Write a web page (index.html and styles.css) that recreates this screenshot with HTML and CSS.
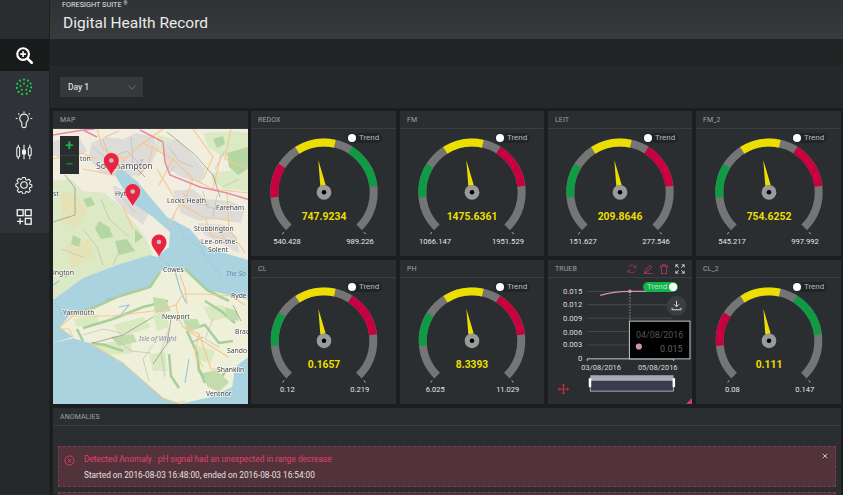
FILE: index.html
```html
<!DOCTYPE html>
<html lang="en">
<head>
<meta charset="utf-8">
<title>Digital Health Record</title>
<link rel="stylesheet" href="styles.css">
</head>
<body>
<svg class="defs" width="0" height="0" aria-hidden="true">
  <defs>
    <symbol id="hub" viewBox="-8 -34 16 42" overflow="visible">
      <circle class="hub" r="7.4"/>
      <circle class="hub-dot" r="2.3"/>
    </symbol>
  </defs>
</svg>
<div class="app">
  <aside class="side">
    <div class="side-top"></div>
    <div class="side-item side-active">
      <svg class="ico" viewBox="0 0 20 20"><circle cx="9" cy="9" r="6.500" fill="none" stroke="#fff" stroke-width="2.400"/><path d="M14 14l4.600 4.600" stroke="#fff" stroke-width="2.800" stroke-linecap="round"/><path d="M9 5.800v6.400M5.800 9h6.400" stroke="#fff" stroke-width="1.800"/></svg>
    </div>
    <nav class="side-nav">
      <div class="side-item">
        <svg class="ico" viewBox="0 0 20 20" fill="#1fd14a"><circle cx="10" cy="1.800" r="1.200"/><circle cx="14.500" cy="3" r="1.200"/><circle cx="17.300" cy="6.200" r="1.200"/><circle cx="18" cy="10.500" r="1.200"/><circle cx="16.600" cy="14.600" r="1.200"/><circle cx="13" cy="17.400" r="1.200"/><circle cx="8" cy="18" r="1.200"/><circle cx="4" cy="15.500" r="1.200"/><circle cx="2" cy="11" r="1.200"/><circle cx="2.500" cy="6.500" r="1.200"/><circle cx="5.500" cy="3" r="1.200"/><circle cx="10" cy="6" r="1.100"/><circle cx="13.800" cy="9" r="1.100"/><circle cx="12.500" cy="13" r="1.100"/><circle cx="7.500" cy="13" r="1.100"/><circle cx="6.200" cy="9" r="1.100"/></svg>
      </div>
      <div class="side-item">
        <svg class="ico" viewBox="0 0 20 20" fill="none" stroke="#f2f2f2" stroke-width="1.200"><path d="M7.600 16.500v-2.800c0-1.500-2.400-2.600-2.400-5.400a4.800 4.800 0 0 1 9.600 0c0 2.800-2.400 3.900-2.400 5.400v2.800c0 1.300-1 2-2.400 2s-2.400-.7-2.400-2z"/><path d="M10 .5v1.800M3.600 2.600l1.300 1.300M16.400 2.600l-1.300 1.300M.8 8.300h2M17.200 8.300h2"/></svg>
      </div>
      <div class="side-item">
        <svg class="ico" viewBox="0 0 20 20" fill="none" stroke="#f2f2f2" stroke-width="1.200"><rect x="2" y="4.500" width="3.200" height="11" rx="1.500"/><rect x="8.400" y="7.500" width="3.200" height="5" rx="1.500" fill="#f2f2f2"/><rect x="14.800" y="5" width="3.200" height="9" rx="1.500"/><path d="M3.600 2v2.500M3.600 15.500V18M10 2v5.500M10 12.500V18M16.400 2v3M16.400 14v4"/></svg>
      </div>
      <div class="side-item">
        <svg class="ico" viewBox="0 0 20 20" fill="none" stroke="#f2f2f2" stroke-width="1.300" stroke-linejoin="round"><path d="M8.300 1h3.400l.5 2.600 1.700.8 2.300-1.400 2.300 2.600-1.500 2.200.5 1.700 2.500.6v3l-2.500.6-.7 1.800 1.400 2.200-2.400 2.400-2.200-1.400-1.700.7-.6 2.500H8.300l-.6-2.500-1.700-.7-2.200 1.400-2.400-2.400 1.400-2.200-.7-1.800L-.4 12.100v-3l2.500-.6.500-1.700L1.100 4.600l2.300-2.600 2.300 1.400 1.700-.8z" transform="translate(1.300 .9) scale(.87)"/><circle cx="10" cy="10" r="3.600"/></svg>
      </div>
      <div class="side-item">
        <svg class="ico" viewBox="0 0 20 20" fill="none" stroke="#f2f2f2" stroke-width="1.500"><rect x="2.500" y="2" width="6.500" height="6.500"/><rect x="11.500" y="2" width="6.500" height="6.500"/><rect x="11.500" y="11.500" width="6.500" height="6.500"/><path d="M5.700 11.500V18M2.300 14.800h7"/></svg>
      </div>
    </nav>
  </aside>
  <main class="main">
    <header class="head">
      <div class="brand">FORESIGHT SUITE <sup class="reg">®</sup></div>
      <h1 class="title">Digital Health Record</h1>
    </header>
    <div class="subbar"></div>
    <div class="toolbar">
      <div class="select">
        <span>Day 1</span>
        <svg class="chev" viewBox="0 0 8 5"><path d="M.5.500L4 4.300 7.500.5" fill="none" stroke="#777" stroke-width=".8"/></svg>
      </div>
    </div>
    <div class="board">
      <div class="grid">
        <section class="panel map-panel">
          <div class="panel-head">MAP</div>
          <div class="map">
            <svg class="map-svg" viewBox="0 0 195 275">
              <rect class="land" width="195" height="275"/>
              <path class="forest-light" d="M0 52L18 50 30 62 52 64 70 80 92 108 100 125 64 136 30 149 0 171z"/>
              <path class="heath" d="M8 62L24 66 34 84 22 100 8 92z"/>
              <path class="heath" d="M12 116L36 110 42 128 18 140z"/>
              <path class="forest" d="M46 92l10 6 4 10-12 2-6-10zM62 112l12-2 8 12-16 4zM20 106l8 4-2 8-8-3zM82 100l8 8-8 6zM30 70l8-2 4 8-8 2z"/>
              <path class="forest-light" d="M104 6l16 4 6 14-12 6-10-10zM126 34l18 2 6 12-14 4zM150 4l30-2 15 2v16l-24 8-16-10zM158 44l30-4 7 2v20l-24-2-12-8z"/>
              <path class="forest" d="M174 24l21-6v22l-10 6-9-8zM160 10l10-3 2 8-8 4z"/>
              <path class="urban" d="M38 14L52 8 70 10 84 4 100 8 106 20 98 34 88 46 66 48 48 44 36 30z"/>
              <path class="urban" d="M112 14L124 10 136 22 152 40 148 54 128 48 116 40 110 26z"/>
              <path class="urban" d="M60 56L76 64 96 84 90 96 72 82 62 70z"/>
              <path class="urban" d="M120 62L140 60 152 70 178 72 192 80 188 94 162 90 146 92 128 84z"/>
              <path class="urban" d="M144 94L172 96 184 108 186 124 166 114 152 106z"/>
              <path class="urban" d="M0 12L26 8 34 22 14 32 0 26z"/>
              <path class="sea" d="M0 171L30 149 64 136 97 126 104 128 116 118 117 103 100 88 78 73 62 46 66 38 84 52 97 68 114 88 137 100 147 112 155 119 195 131V275H127L157 268 179 258 182 238 195 228V171L154 161 130 139 109 141 97 158 64 168 40 179 17 186 7 198 20 208 0 214z"/>
              <path class="sea" d="M0 214L20 209 37 214 70 234 110 269 127 275H0z"/>
              <path class="isle" d="M0 214L20 208 7 198 17 186 40 179 64 168 97 158 109 141 130 139 154 161 195 171V228L182 238 179 258 157 268 127 274 110 269 70 234 37 214 20 209z"/>
              <path class="isle-soft" d="M60 196l30-8 8 10-30 10zM40 216l36-6 4 14-24 2zM100 186l12-4 4 16-12 4zM150 178l20-2 6 12-18 4zM142 216l20 6-4 12-16-4zM96 226l16-4 2 20-14 0zM20 190l24-4 2 8-22 4z"/>
              <path class="wood" d="M17 186L40 179 64 168 97 158 107 143M132 140L154 161 176 172M30 199L60 190 90 178 115 172M130 186l8 14 14-4 14 18 14-2M134 202l10 22 2 18 8 8 12 3 8-14M116 225l2 22 8 12M146 240l6 14M24 200l6 12M152 172l16 10 14 12M38 214l14 2 18 6"/>
              <path class="wood-patch" d="M100 168l12 2 6 12-16 2zM58 208l22-3 4 8-18 4zM150 244l14-3 12 12-10 10-12-6zM130 190l14 0 4 8-14 4zM172 178l12 4 2 10-12-2z"/>
              <path class="stream" d="M122 142l5 18 6 14M66 178l10-2-10 12M136 230l-4 24M138 214l12-6M0 156l6-4M12 148l4-3M52 170l8 0"/>
              <path class="minor" d="M40 18l14 12 20-8 12 12M50 10l6 18M78 8l2 26M60 36l18 4 10-10M116 18l10 14 14 6M122 36l-6 8M130 64l10 10 16 2M150 62l4 16 18 4M164 66l-4 22M146 98l20 4 10 12M64 62l10 12 8 10M30 100l14 18 6 18M8 120l22 8M48 70l8 20 20 18M60 136l8-18M100 216l-10 14 6 22M60 208l18 14 20 2M116 200l-8 22 4 26M160 190l-8 20 14 8M30 206l20-6 18 4M172 22l-10 18M186 50l-16 8"/>
              <path class="road" d="M44 0L50 20 72 30 90 14 120 30 140 50 160 60 195 64M90 14L110 0M72 30L60 46M120 30L106 56M140 50L130 76 150 88 180 92M174 64L176 100 192 124M104 40L122 70M70 78L80 100M140 0L160 28 150 50M178 0L172 30 195 40M0 30L30 24M60 46L30 40M52 8L66 2M30 24L42 30M84 48L96 34 100 16M126 76L116 96M152 88L158 106 176 112M160 60L168 26"/>
              <path class="road" d="M10 195L20 187 60 187 100 182 123 176 126 190 130 198 150 212 175 228M130 198L146 205 158 240 192 241M123 176L130 165 150 165 178 167M10 195L6 200 16 200 20 208M127 146L132 160 134 175M146 205L142 225 150 238M178 167L192 176"/>
              <path class="coast" d="M37 214L70 234 110 269 124 274 132 272"/>
              <path class="road-grey" d="M114 3L140 24 160 46 167 68M12 46L22 59 22 86 0 93M100 235l14-20 4-25M40 214l30-8 30-18M180 176l8 16M90 30l-6 10 8 8"/>
              <path class="motorway" d="M0 6L30 1 44 8M30 1L42 0M110 13L112 33 117 46 147 58 174 64 197 71M87 1L110 13"/>
              <path class="ferry" d="M106 128L118 138M120 88L132 108 150 120M0 170L10 186M148 122L170 150"/>
              <text class="lbl big" x="43" y="40">Southampton</text>
              <text class="lbl" x="27" y="32">ton</text>
              <text class="lbl" x="0" y="67">st</text>
              <text class="lbl" x="62" y="67">Hythe</text>
              <text class="lbl" x="114" y="74">Locks Heath</text>
              <text class="lbl" x="163" y="81">Fareham</text>
              <text class="lbl" x="141" y="102">Stubbington</text>
              <text class="lbl" x="148" y="115">Lee-on-the-</text>
              <text class="lbl" x="155" y="123">Solent</text>
              <text class="lbl" x="0" y="146">ington</text>
              <text class="lbl" x="110" y="143">Cowes</text>
              <text class="lbl sea-lbl" x="173" y="147">The So</text>
              <text class="lbl" x="178" y="169">Ryde</text>
              <text class="lbl" x="10" y="186">Yarmouth</text>
              <text class="lbl" x="109" y="190">Newport</text>
              <text class="lbl isle-lbl" x="86" y="212">Isle of Wight</text>
              <text class="lbl" x="182" y="205">Brad</text>
              <text class="lbl" x="174" y="224">Sando</text>
              <text class="lbl" x="164" y="243">Shanklin</text>
              <text class="lbl" x="153" y="267">Ventnor</text>
              <g class="pin" transform="translate(58.300 46)"><path d="M0 0C-2-5-7.500-9-7.500-14.500a7.500 7.500 0 0 1 15 0C7.500-9 2-5 0 0z"/><circle cy="-14.500" r="2.300"/></g>
              <g class="pin" transform="translate(79.700 77)"><path d="M0 0C-2-5-7.500-9-7.500-14.500a7.500 7.500 0 0 1 15 0C7.500-9 2-5 0 0z"/><circle cy="-14.500" r="2.300"/></g>
              <g class="pin" transform="translate(106 127.500)"><path d="M0 0C-2-5-7.500-9-7.500-14.500a7.500 7.500 0 0 1 15 0C7.500-9 2-5 0 0z"/><circle cy="-14.500" r="2.300"/></g>
            </svg>
            <div class="zoomctl">
              <div class="zoom-btn zoom-plus">+</div>
              <div class="zoom-btn zoom-minus">−</div>
            </div>
          </div>
        </section>

        <section class="panel">
          <div class="panel-head">REDOX</div>
          <div class="trend"><i class="knob"></i>Trend</div>
          <svg class="gauge" viewBox="-72 -63.300 144 127">
            <path class="arc" pathLength="270" d="M-35.140 35.140A49.700 49.700 0 1 1 35.140 35.140"/>
            <path class="arc seg-left red" pathLength="270" d="M-35.140 35.140A49.700 49.700 0 1 1 35.140 35.140"/>
            <path class="arc seg-mid" pathLength="270" d="M-35.140 35.140A49.700 49.700 0 1 1 35.140 35.140"/>
            <path class="arc seg-right green" pathLength="270" d="M-35.140 35.140A49.700 49.700 0 1 1 35.140 35.140"/>
            <path class="tick" d="M-40 40l-1.800 1.800M40 40l1.800 1.800"/>
            <polygon class="needle" points="-5.700,-32.300 -3.700,-6.300 1.700,-7.300"/>
            <use href="#hub" x="-8" y="-34" width="16" height="42"/>
            <text class="value" y="27.700">747.9234</text>
            <text class="lim" x="-37" y="51.500">540.428</text>
            <text class="lim" x="36" y="51.500">989.226</text>
          </svg>
        </section>

        <section class="panel">
          <div class="panel-head">FM</div>
          <div class="trend"><i class="knob"></i>Trend</div>
          <svg class="gauge" viewBox="-72 -63.300 144 127">
            <path class="arc" pathLength="270" d="M-35.140 35.140A49.700 49.700 0 1 1 35.140 35.140"/>
            <path class="arc seg-left green" pathLength="270" d="M-35.140 35.140A49.700 49.700 0 1 1 35.140 35.140"/>
            <path class="arc seg-mid" pathLength="270" d="M-35.140 35.140A49.700 49.700 0 1 1 35.140 35.140"/>
            <path class="arc seg-right red" pathLength="270" d="M-35.140 35.140A49.700 49.700 0 1 1 35.140 35.140"/>
            <path class="tick" d="M-40 40l-1.800 1.800M40 40l1.800 1.800"/>
            <polygon class="needle" points="-5.700,-32.300 -3.700,-6.300 1.700,-7.300"/>
            <use href="#hub" x="-8" y="-34" width="16" height="42"/>
            <text class="value" y="27.700">1475.6361</text>
            <text class="lim" x="-37" y="51.500">1066.147</text>
            <text class="lim" x="36" y="51.500">1951.529</text>
          </svg>
        </section>

        <section class="panel">
          <div class="panel-head">LEIT</div>
          <div class="trend"><i class="knob"></i>Trend</div>
          <svg class="gauge" viewBox="-72 -63.300 144 127">
            <path class="arc" pathLength="270" d="M-35.140 35.140A49.700 49.700 0 1 1 35.140 35.140"/>
            <path class="arc seg-left green" pathLength="270" d="M-35.140 35.140A49.700 49.700 0 1 1 35.140 35.140"/>
            <path class="arc seg-mid" pathLength="270" d="M-35.140 35.140A49.700 49.700 0 1 1 35.140 35.140"/>
            <path class="arc seg-right red" pathLength="270" d="M-35.140 35.140A49.700 49.700 0 1 1 35.140 35.140"/>
            <path class="tick" d="M-40 40l-1.800 1.800M40 40l1.800 1.800"/>
            <polygon class="needle" points="-5.700,-32.300 -3.700,-6.300 1.700,-7.300"/>
            <use href="#hub" x="-8" y="-34" width="16" height="42"/>
            <text class="value" y="27.700">209.8646</text>
            <text class="lim" x="-37" y="51.500">151.627</text>
            <text class="lim" x="36" y="51.500">277.546</text>
          </svg>
        </section>

        <section class="panel">
          <div class="panel-head">FM_2</div>
          <div class="trend"><i class="knob"></i>Trend</div>
          <svg class="gauge" viewBox="-72 -63.300 144 127">
            <path class="arc" pathLength="270" d="M-35.140 35.140A49.700 49.700 0 1 1 35.140 35.140"/>
            <path class="arc seg-left green" pathLength="270" d="M-35.140 35.140A49.700 49.700 0 1 1 35.140 35.140"/>
            <path class="arc seg-mid" pathLength="270" d="M-35.140 35.140A49.700 49.700 0 1 1 35.140 35.140"/>
            <path class="arc seg-right red" pathLength="270" d="M-35.140 35.140A49.700 49.700 0 1 1 35.140 35.140"/>
            <path class="tick" d="M-40 40l-1.800 1.800M40 40l1.800 1.800"/>
            <polygon class="needle" points="-5.700,-32.300 -3.700,-6.300 1.700,-7.300"/>
            <use href="#hub" x="-8" y="-34" width="16" height="42"/>
            <text class="value" y="27.700">754.6252</text>
            <text class="lim" x="-37" y="51.500">545.217</text>
            <text class="lim" x="36" y="51.500">997.992</text>
          </svg>
        </section>

        <section class="panel">
          <div class="panel-head">CL</div>
          <div class="trend"><i class="knob"></i>Trend</div>
          <svg class="gauge" viewBox="-72 -63.300 144 127">
            <path class="arc" pathLength="270" d="M-35.140 35.140A49.700 49.700 0 1 1 35.140 35.140"/>
            <path class="arc seg-left green" pathLength="270" d="M-35.140 35.140A49.700 49.700 0 1 1 35.140 35.140"/>
            <path class="arc seg-mid" pathLength="270" d="M-35.140 35.140A49.700 49.700 0 1 1 35.140 35.140"/>
            <path class="arc seg-right red" pathLength="270" d="M-35.140 35.140A49.700 49.700 0 1 1 35.140 35.140"/>
            <path class="tick" d="M-40 40l-1.800 1.800M40 40l1.800 1.800"/>
            <polygon class="needle" points="-5.700,-32.300 -3.700,-6.300 1.700,-7.300"/>
            <use href="#hub" x="-8" y="-34" width="16" height="42"/>
            <text class="value" y="27.700">0.1657</text>
            <text class="lim" x="-37" y="51.500">0.12</text>
            <text class="lim" x="36" y="51.500">0.219</text>
          </svg>
        </section>

        <section class="panel">
          <div class="panel-head">PH</div>
          <div class="trend"><i class="knob"></i>Trend</div>
          <svg class="gauge" viewBox="-72 -63.300 144 127">
            <path class="arc" pathLength="270" d="M-35.140 35.140A49.700 49.700 0 1 1 35.140 35.140"/>
            <path class="arc seg-left green" pathLength="270" d="M-35.140 35.140A49.700 49.700 0 1 1 35.140 35.140"/>
            <path class="arc seg-mid" pathLength="270" d="M-35.140 35.140A49.700 49.700 0 1 1 35.140 35.140"/>
            <path class="arc seg-right red" pathLength="270" d="M-35.140 35.140A49.700 49.700 0 1 1 35.140 35.140"/>
            <path class="tick" d="M-40 40l-1.800 1.800M40 40l1.800 1.800"/>
            <polygon class="needle" points="-5.700,-32.300 -3.700,-6.300 1.700,-7.300"/>
            <use href="#hub" x="-8" y="-34" width="16" height="42"/>
            <text class="value" y="27.700">8.3393</text>
            <text class="lim" x="-37" y="51.500">6.025</text>
            <text class="lim" x="36" y="51.500">11.029</text>
          </svg>
        </section>

        <section class="panel">
          <div class="panel-head panel-head-tools">
            <span>TRUEB</span>
            <div class="tools">
              <svg class="tool" viewBox="0 0 12 12" fill="none" stroke="#b03350" stroke-width="1"><path d="M2 3.500A5 5 0 0 1 10.500 4M10 8.500A5 5 0 0 1 1.500 8"/><path d="M10.800 1.500v3h-3M1.200 10.500v-3h3"/></svg>
              <svg class="tool" viewBox="0 0 12 12" fill="none" stroke="#c9385a" stroke-width="1"><path d="M2.500 8L8.500 1.500l2 2-6 6.500-2.500.2zM1 11.500h10.500"/></svg>
              <svg class="tool" viewBox="0 0 12 12" fill="none" stroke="#c9385a" stroke-width="1"><path d="M1 2.500h10M4 2.500V1h4v1.500M2.500 2.500l.6 9h5.800l.6-9"/></svg>
              <svg class="tool" viewBox="0 0 12 12" fill="none" stroke="#e8e8e8" stroke-width="1"><path d="M1 4V1h3M1 1l3.500 3.500M11 4V1H8M11 1L7.500 4.500M1 8v3h3M1 11l3.500-3.500M11 8v3H8M11 11L7.500 7.500"/></svg>
            </div>
          </div>
          <svg class="chart" viewBox="0 0 144 127">
            <path class="gridline" d="M39 13.500H112M39 27H125M39 40.500H125M39 54H81M39 67.500H81"/>
            <path class="axis" d="M39 81.500H126M39 81.500v2M126 81.500v2"/>
            <text class="ylab" x="34" y="16">0.015</text>
            <text class="ylab" x="34" y="29.500">0.012</text>
            <text class="ylab" x="34" y="43">0.009</text>
            <text class="ylab" x="34" y="57">0.006</text>
            <text class="ylab" x="34" y="70">0.003</text>
            <text class="ylab" x="34" y="84">0</text>
            <text class="xlab" x="53" y="93">03/08/2016</text>
            <text class="xlab" x="110" y="93">05/08/2016</text>
            <path class="hover" d="M82 13.500V43"/>
            <path class="line" d="M52 17.500C62 14.500 72 13.500 82 13.500S102 13.500 112 13.500"/>
            <circle class="pt" cx="82" cy="13.500" r="1.800"/>
            <circle class="dl-btn" cx="129" cy="28" r="10"/>
            <path class="dl-ico" d="M129 23v5.500M126.500 26.500l2.500 2.500 2.500-2.500M124.500 30v2h9v-2"/>
            <rect class="tip" x="81.500" y="43.500" width="61" height="38"/>
            <text class="tip-date" x="112" y="60">04/08/2016</text>
            <circle class="tip-dot" cx="91" cy="69" r="3.100"/>
            <text class="tip-val" x="135" y="75">0.015</text>
            <rect class="brush-top" x="42" y="98" width="84" height="5"/>
            <rect class="brush" x="42" y="103" width="84" height="11"/>
            <rect class="brush-h" x="40.500" y="101" width="2.500" height="9"/>
            <rect class="brush-h" x="125" y="101" width="2.500" height="9"/>
            <path class="move" d="M15 107v10M10 112h10M13.500 108.500L15 107l1.500 1.500M13.500 115.500L15 117l1.500-1.500M11.500 110.500L10 112l1.500 1.500M18.500 110.500L20 112l-1.500 1.500"/>
          </svg>
          <div class="trend trend-on">Trend<i class="knob"></i></div>
          <div class="corner"></div>
        </section>

        <section class="panel">
          <div class="panel-head">CL_2</div>
          <div class="trend"><i class="knob"></i>Trend</div>
          <svg class="gauge" viewBox="-72 -63.300 144 127">
            <path class="arc" pathLength="270" d="M-35.140 35.140A49.700 49.700 0 1 1 35.140 35.140"/>
            <path class="arc seg-left red" pathLength="270" d="M-35.140 35.140A49.700 49.700 0 1 1 35.140 35.140"/>
            <path class="arc seg-mid" pathLength="270" d="M-35.140 35.140A49.700 49.700 0 1 1 35.140 35.140"/>
            <path class="arc seg-right green" pathLength="270" d="M-35.140 35.140A49.700 49.700 0 1 1 35.140 35.140"/>
            <path class="tick" d="M-40 40l-1.800 1.800M40 40l1.800 1.800"/>
            <polygon class="needle" points="-5.700,-32.300 -3.700,-6.300 1.700,-7.300"/>
            <use href="#hub" x="-8" y="-34" width="16" height="42"/>
            <text class="value" y="27.700">0.111</text>
            <text class="lim" x="-37" y="51.500">0.08</text>
            <text class="lim" x="36" y="51.500">0.147</text>
          </svg>
        </section>
      </div>

      <section class="panel anomalies">
        <div class="panel-head">ANOMALIES</div>
        <div class="alerts">
          <div class="alert">
            <svg class="alert-ico" viewBox="0 0 12 12" fill="none" stroke="#e0406a" stroke-width="1"><circle cx="6" cy="6" r="5"/><path d="M4.200 4.200l3.600 3.600M7.800 4.200l-3.600 3.600"/></svg>
            <div class="alert-text">
              <div class="alert-title">Detected Anomaly : pH signal had an unexpected in range decrease</div>
              <div class="alert-body">Started on 2016-08-03 16:48:00, ended on 2016-08-03 16:54:00</div>
            </div>
            <svg class="alert-close" viewBox="0 0 8 8"><path d="M1 1l6 6M7 1L1 7" stroke="#eee" stroke-width="1"/></svg>
          </div>
          <div class="alert"></div>
        </div>
      </section>
    </div>
  </main>
</div>
</body>
</html>
```

FILE: styles.css
```css
* { box-sizing: border-box; }
html, body { margin: 0; height: 495px; overflow: hidden; background: #1b1d1e; }
body { font-family: Roboto, "Liberation Sans", sans-serif; color: #ddd; }
.defs { position: absolute; }
.app { display: flex; height: 495px; }

/* Sidebar */
.side { width: 50px; flex: none; background: #26292b; display: flex; flex-direction: column; border-right: 1px solid #1f2122; }
.side-top { height: 39px; background: #2a2d2f; }
.side-item { height: 32.500px; display: flex; align-items: center; justify-content: center; padding-right: 2px; }
.side-active { height: 32px; background: #191b1b; }
.side-nav { background: #2f3337; height: 162px; }
.ico { width: 18px; height: 18px; }

/* Header */
.main { flex: 1; min-width: 0; display: flex; flex-direction: column; }
.head { height: 39px; background: linear-gradient(#2f3234, #383b3d); padding: 0 0 0 12px; flex: none; }
.brand { font-size: 7.300px; line-height: 9px; font-weight: 400; color: #e4e4e4; }
.reg { font-size: 5px; vertical-align: top; line-height: 6px; }
.title { margin: 4px 0 0 1px; font-size: 15.500px; line-height: 20px; font-weight: 400; color: #eaeaea; }
.subbar { height: 27px; background: #212425; flex: none; }
.toolbar { height: 42px; flex: none; background: #25282a; padding: 11px 0 0 10px; }
.select { width: 83px; height: 20px; background: #36393b; display: flex; align-items: center; justify-content: space-between; padding: 0 7px 0 8px; font-size: 8.500px; font-weight: 500; color: #ddd; }
.chev { width: 8px; height: 5px; }

/* Board */
.board { flex: 1; padding: 3px 2px 0 3px; min-height: 0; }
.grid { display: grid; grid-template-columns: 194px 145px 144px 144px 145px; grid-template-rows: 145px 144px; gap: 4px; }
.panel { position: relative; background: #2a2e30; display: flex; flex-direction: column; overflow: hidden; }
.panel-head { height: 18px; flex: none; display: flex; align-items: center; padding-left: 7px; font-size: 7px; color: #a0a2a4; border-bottom: 1px solid #3b3e40; letter-spacing: .1px; }
.panel-head-tools { justify-content: space-between; padding-right: 7px; }
.tools { display: flex; gap: 6px; }
.tool { width: 10px; height: 10px; }

/* Map */
.map-panel { grid-row: 1 / span 2; margin-right: -1px; }
.map { position: relative; flex: 1; min-height: 0; }
.map-svg { display: block; width: 195px; height: 275px; filter: blur(.35px); }
.land { fill: #f1eee0; }
.forest-light { fill: #dbe9c4; }
.heath { fill: #e4e3b8; }
.forest { fill: #b5d6a3; }
.urban { fill: #dddcd9; }
.sea { fill: #aad3df; }
.isle { fill: #eff0da; }
.isle-soft { fill: #d9e9c0; }
.wood { fill: none; stroke: #a9d09a; stroke-width: 2.600; stroke-linejoin: round; }
.wood-patch { fill: #c2dcae; }
.stream { fill: none; stroke: #8fc5d8; stroke-width: 1.100; }
.minor { fill: none; stroke: #b9b7b0; stroke-width: .6; }
.road { fill: none; stroke: #f6c78e; stroke-width: 1.100; }
.coast { fill: none; stroke: #f6c78e; stroke-width: 1; }
.road-grey { fill: none; stroke: #8f8f8f; stroke-width: .7; }
.motorway { fill: none; stroke: #e88aa5; stroke-width: 1.500; }
.ferry { fill: none; stroke: #7ea6c8; stroke-width: .5; stroke-dasharray: 2 2; }
.lbl { font-family: "Noto Sans", sans-serif; font-size: 6.800px; fill: #444; stroke: rgba(255,255,255,.7); stroke-width: 1.400px; paint-order: stroke; }
.big { font-size: 8.800px; fill: #555; }
.sea-lbl { font-style: italic; fill: #5b8fb0; stroke: none; }
.isle-lbl { font-style: italic; fill: #8b8aa8; stroke: none; }
.pin path { fill: #ec2340; }
.pin circle { fill: #b8c4cc; }
.zoomctl { position: absolute; left: 7px; top: 7px; width: 19px; height: 38px; background: #2a2d2e; display: flex; flex-direction: column; }
.zoom-btn { flex: 1; display: flex; align-items: center; justify-content: center; font-size: 15px; font-weight: 500; line-height: 1; }
.zoom-plus { color: #1fb94a; border-bottom: 1px solid #3d4042; }
.zoom-minus { color: #128a38; }

/* Gauges */
.gauge { display: block; width: 144px; height: 127px; margin: 0 auto; }
.arc { fill: none; stroke: #757575; stroke-width: 8; }
.seg-left { stroke-dasharray: 0 39.300 37.700 300; }
.seg-mid { stroke: #ecdf00; stroke-dasharray: 0 102.500 45.100 300; }
.seg-right { stroke-dasharray: 0 167 51 300; }
.red { stroke: #c9003f; }
.green { stroke: #109a44; }
.tick { stroke: #eee; stroke-width: .8; fill: none; }
.needle { fill: #ecdf00; }
.hub { fill: #9a9a9a; }
.hub-dot { fill: #000; }
.value { fill: #ecdf00; font-size: 10.400px; font-weight: 700; text-anchor: middle; }
.lim { fill: #e6e6e6; font-size: 7.600px; font-weight: 400; text-anchor: middle; }

/* Trend toggle */
.trend { position: absolute; top: 22px; right: 14px; width: 35px; height: 9.500px; border-radius: 5px; background: #212426; display: flex; align-items: center; gap: 3px; padding: 0 2px 0 1px; font-size: 8px; color: #b8b8b8; }
.knob { width: 8px; height: 8px; flex: none; border-radius: 50%; background: #fff; }
.trend-on { background: #14b44c; color: #b9e6c5; justify-content: space-between; padding: 0 1px 0 4px; gap: 0; }

/* Chart */
.chart { display: block; width: 144px; height: 127px; }
.gridline { stroke: #555; stroke-width: .7; fill: none; }
.axis { stroke: #eee; stroke-width: .8; fill: none; }
.ylab { fill: #ddd; font-size: 7.800px; text-anchor: end; }
.xlab { fill: #ddd; font-size: 7.500px; text-anchor: middle; }
.hover { stroke: #999; stroke-width: 1; stroke-dasharray: 1.500 1.500; fill: none; }
.line { stroke: #d68fb5; stroke-width: 1.300; fill: none; }
.pt { fill: #d68fb5; }
.dl-btn { fill: #3b3e40; }
.dl-ico { stroke: #eee; stroke-width: .9; fill: none; }
.tip { fill: #000; stroke: #c8c8c8; stroke-width: 1; }
.tip-date { fill: #555; font-size: 9px; text-anchor: middle; }
.tip-val { fill: #666; font-size: 9px; text-anchor: end; }
.tip-dot { fill: #d68fb5; }
.brush-top { fill: #a6a6b6; }
.brush { fill: #3e3a4e; stroke: #ddd; stroke-width: .7; }
.brush-h { fill: #fff; }
.move { stroke: #e0304f; stroke-width: .9; fill: none; }
.corner { position: absolute; right: 0; bottom: 0; width: 6px; height: 6px; background: #d63a60; clip-path: polygon(100% 0, 100% 100%, 0 100%); }

/* Anomalies */
.anomalies { height: 100px; margin-top: 4px; }
.alerts { display: flex; flex-direction: column; gap: 5px; padding: 20px 5px 0; }
.alert { height: 41px; flex: none; background: #53333b; border: 1px dashed #7c3a4a; display: flex; padding: 7px 6px 0 5px; }
.alert-ico { width: 11px; height: 11px; flex: none; margin: 1px 9px 0 0; }
.alert-text { flex: 1; }
.alert-title { font-size: 8.300px; line-height: 10px; color: #e0406a; }
.alert-body { margin-top: 6px; font-size: 8.250px; line-height: 10px; color: #e2e2e2; }
.alert-close { width: 6px; height: 6px; margin-top: -1px; margin-right: 1px; }
```
